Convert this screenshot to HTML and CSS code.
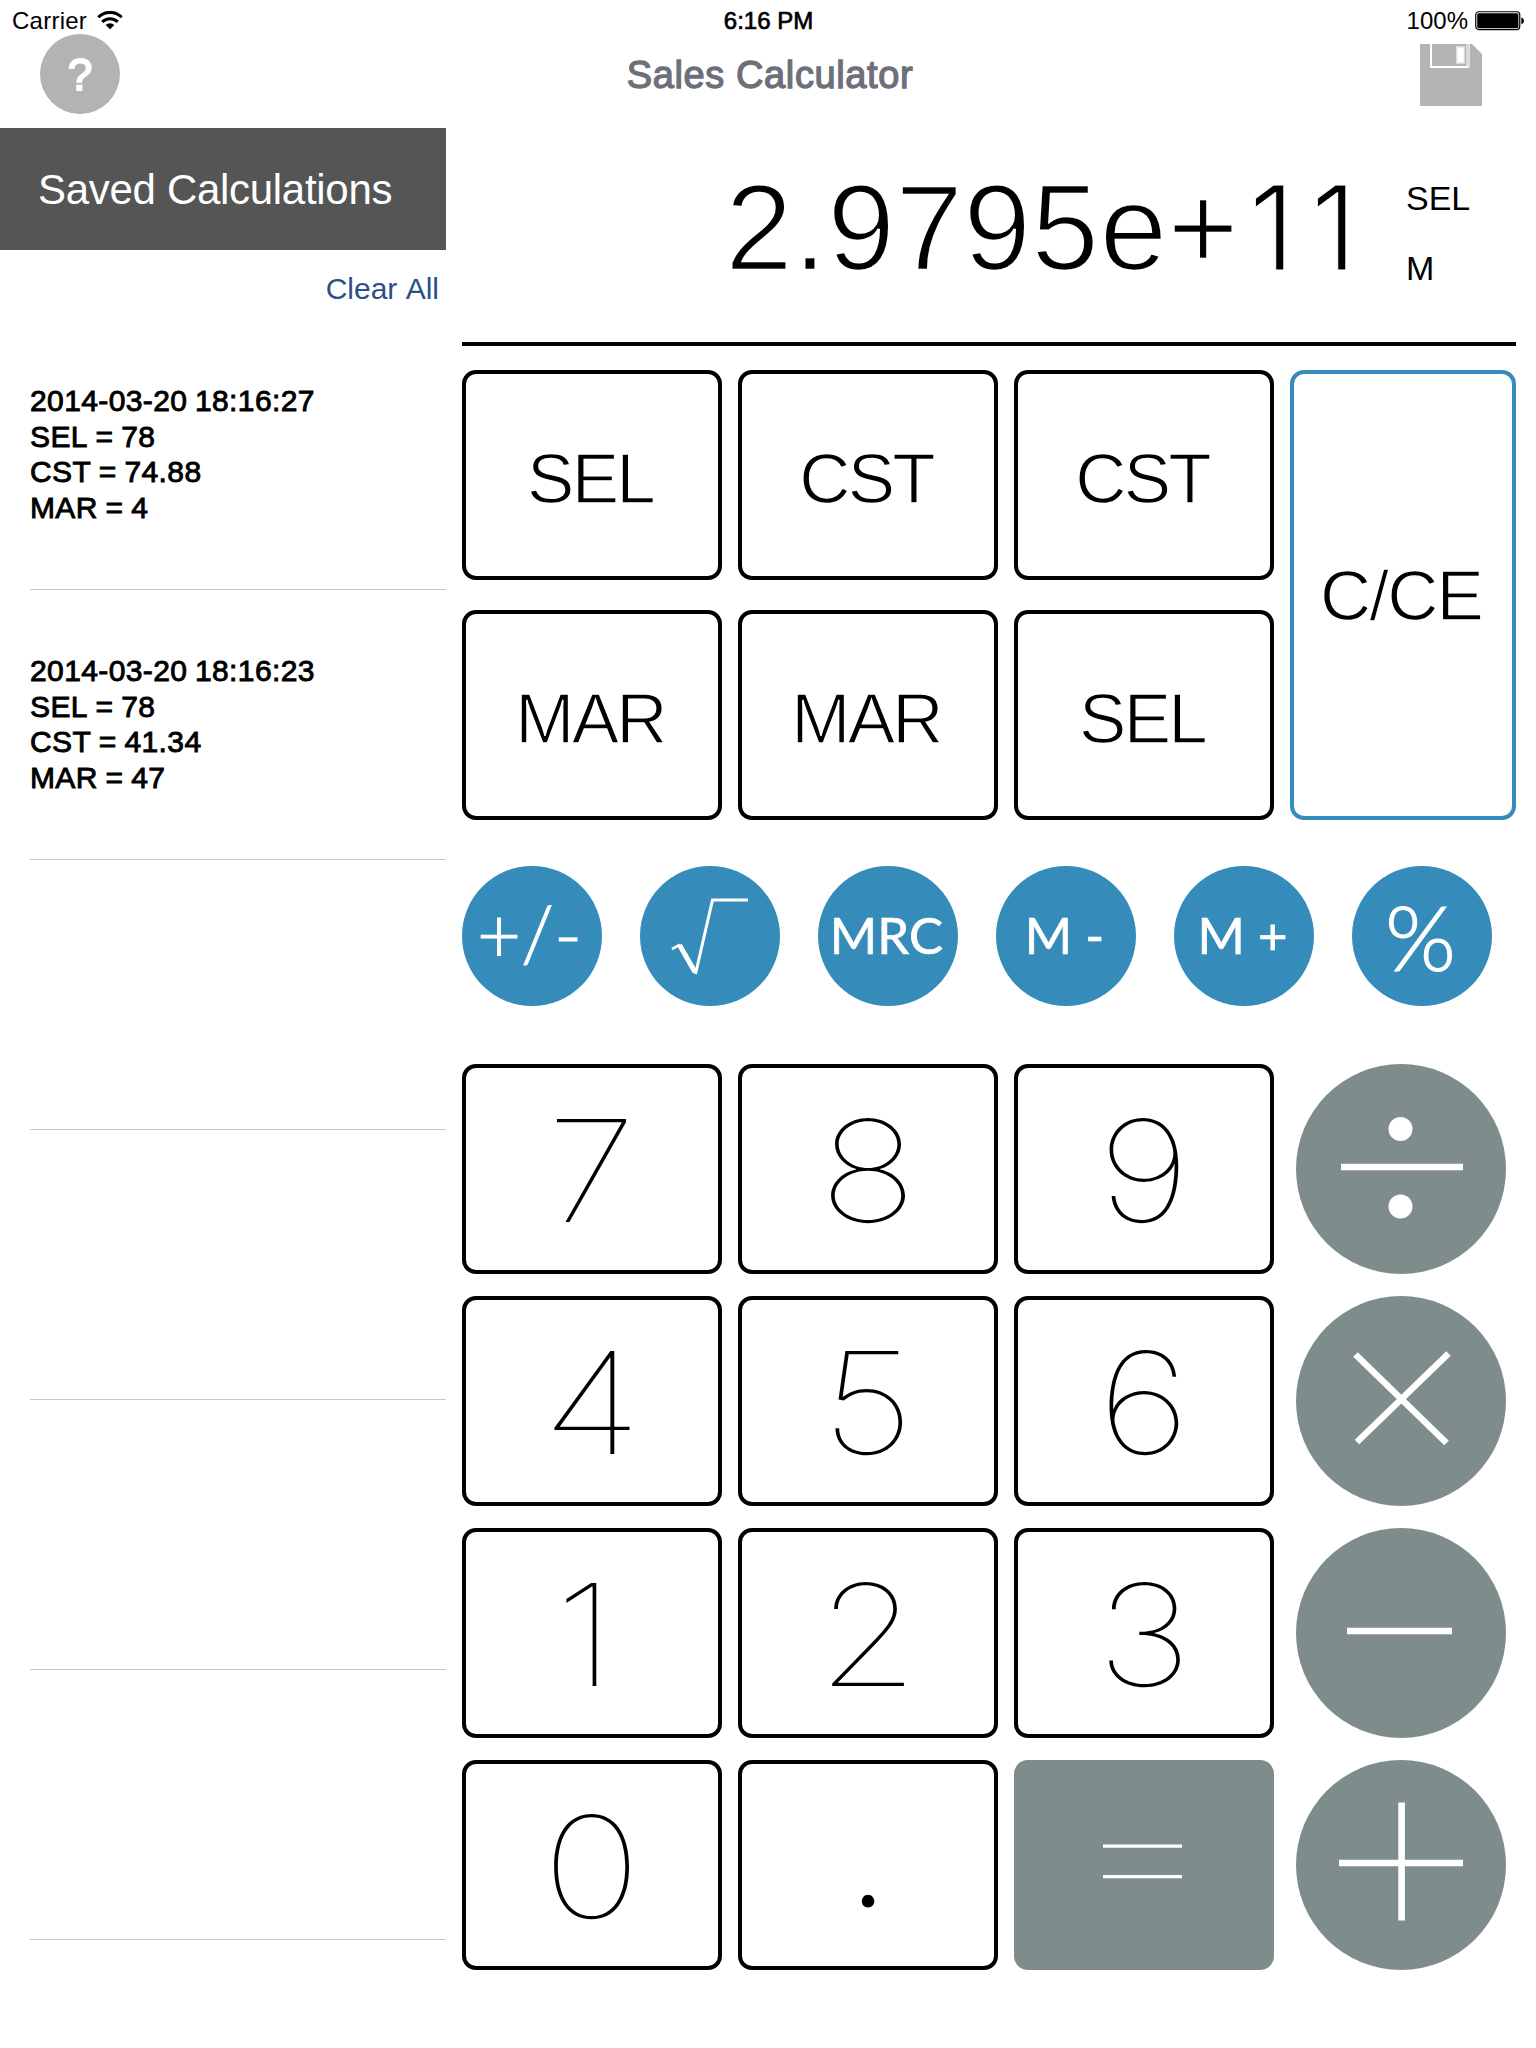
FILE: index.html
```html
<!DOCTYPE html>
<html lang="en">
<head>
<meta charset="utf-8">
<title>Sales Calculator</title>
<link rel="stylesheet" href="styles.css">
</head>
<body>
<header class="status">
  <div class="status-left"><span>Carrier</span>
    <svg class="wifi" width="26" height="19" viewBox="0 0 26 19"><g fill="none" stroke="#000" stroke-width="3"><path d="M1.3 6.2a16.6 16.6 0 0 1 23.4 0"/><path d="M5.2 10.9a11 11 0 0 1 15.6 0"/></g><path d="M13 18.2l-4.3-4.1a6.1 6.1 0 0 1 8.6 0z"/></svg>
  </div>
  <div class="status-time">6:16 PM</div>
  <div class="status-right"><span>100%</span>
    <svg width="50" height="20" viewBox="0 0 50 20"><rect x=".75" y=".75" width="44" height="17.8" rx="3" fill="none" stroke="#000" stroke-width="1.2"/><rect x="2.2" y="2.2" width="41.2" height="15" rx="1.6"/><path d="M46.3 6.2q2.7 1 2.7 3.5t-2.7 3.5z"/></svg>
  </div>
</header>
<nav class="nav">
  <button class="help">?</button>
  <h1 class="title">Sales Calculator</h1>
  <button class="save" aria-label="Save"><svg width="62" height="62" viewBox="0 0 62 62"><path d="M0 0h52l10 10v52H0z" fill="#b3b3b3"/><path d="M46 0h4v24h-4z" fill="#dcdcdc"/><path d="M10 0h2v22h36v2H10z" fill="#fff"/><path d="M36 2h9v18h-9z" fill="#dcdcdc"/><path d="M37.3 3.5h6.4v15h-6.4z" fill="#fff"/></svg></button>
</nav>
<main class="main">
  <aside class="saved">
    <h2 class="saved-title">Saved Calculations</h2>
    <div class="clear"><a>Clear All</a></div>
    <ul class="list">
      <li>2014-03-20 18:16:27<br>SEL = 78<br>CST = 74.88<br>MAR = 4</li>
      <li>2014-03-20 18:16:23<br>SEL = 78<br>CST = 41.34<br>MAR = 47</li>
      <li></li><li></li><li></li><li></li>
    </ul>
  </aside>
  <section class="calc">
    <div class="display">
      <output class="value">2.9795e+<span class="ones">11</span></output>
      <div class="flags"><span>SEL</span><span>M</span></div>
    </div>
    <div class="modes">
      <button class="key word">SEL</button><button class="key word">CST</button><button class="key word">CST</button><button class="key word clear-key">C/CE</button>
      <button class="key word">MAR</button><button class="key word">MAR</button><button class="key word">SEL</button>
    </div>
    <div class="memory">
      <button class="round sign">+/-</button>
      <button class="round" aria-label="Square root"><svg width="140" height="140" viewBox="0 0 140 140" fill="none" stroke="#fff"><path d="M32 83l8-4.300" stroke-width="2.600"/><path d="M39.500 79L55 106" stroke-width="5"/><path d="M55.500 108L72.500 34H108" stroke-width="3"/></svg></button>
      <button class="round mem">MRC</button>
      <button class="round mem">M -</button>
      <button class="round mem">M +</button>
      <button class="round percent">%</button>
    </div>
    <div class="pad">
      <button class="key num"><span>7</span></button><button class="key num"><span>8</span></button><button class="key num"><span>9</span></button>
      <button class="op" aria-label="Divide"><svg width="210" height="210" viewBox="0 0 210 210" fill="#fff"><circle cx="104.500" cy="65" r="12"/><circle cx="104.500" cy="142.500" r="12"/><path d="M45 99.700h122v6.600H45z"/></svg></button>
      <button class="key num wide"><span>4</span></button><button class="key num"><span>5</span></button><button class="key num"><span>6</span></button>
      <button class="op" aria-label="Multiply"><svg width="210" height="210" viewBox="0 0 210 210" stroke="#fff" stroke-width="6.500"><path d="M59.500 58.500L150.500 147M152.500 57.500L61 146"/></svg></button>
      <button class="key num one"><span>1</span></button><button class="key num"><span>2</span></button><button class="key num"><span>3</span></button>
      <button class="op" aria-label="Subtract"><svg width="210" height="210" viewBox="0 0 210 210" fill="#fff"><path d="M51 99.700h105v6.600H51z"/></svg></button>
      <button class="key num wide"><span>0</span></button><button class="key dot">.</button>
      <button class="key equals" aria-label="Equals"><svg width="260" height="210" viewBox="0 0 260 210" fill="#fff"><path d="M89 84.500h79v3.200H89zM89 115h79v3.200H89z"/></svg></button>
      <button class="op" aria-label="Add"><svg width="210" height="210" viewBox="0 0 210 210" fill="#fff"><path d="M43 99.700h124v6.600H43zM102.300 42.500h6.600v118h-6.600z"/></svg></button>
    </div>
  </section>
</main>
</body>
</html>
```

FILE: styles.css
```css
* { box-sizing: border-box; margin: 0; padding: 0; }
body { width: 1536px; height: 2048px; overflow: hidden; background: #fff; color: #000; font-family: "Liberation Sans", Arial, sans-serif; font-kerning: none; }
button { display: flex; align-items: center; justify-content: center; background: none; border: 0; color: inherit; font: inherit; }
svg { display: block; flex: none; }

.status { display: grid; grid-template-columns: 1fr auto 1fr; height: 34px; padding: 7px 11px 0 12px; font-size: 24px; line-height: 28px; }
.status-left { display: flex; gap: 10px; letter-spacing: .25px; }
.status-left svg, .status-right svg { margin-top: 4px; }
.status-time { -webkit-text-stroke: .7px #000; }
.status-right { display: flex; justify-content: flex-end; gap: 7px; }

.nav { display: flex; justify-content: space-between; height: 94px; padding: 0 54px 0 40px; }
.help { width: 80px; height: 80px; padding-top: 2px; border-radius: 50%; background: #b3b3b3; color: #fff; font-size: 44px; -webkit-text-stroke: 1.800px #fff; }
.title { font-size: 38px; font-weight: 400; line-height: 82px; letter-spacing: .6px; color: #6d7079; -webkit-text-stroke: 1.300px #6d7079; }
.save { align-self: flex-start; margin-top: 10px; }

.main { display: grid; grid-template-columns: 446px 1fr; }
.saved-title { height: 122px; padding-left: 38px; background: #555; color: #fff; font-size: 42px; font-weight: 400; line-height: 124px; letter-spacing: -.3px; }
.clear { height: 70px; padding: 22px 7px 0 0; color: #2a5087; font-size: 30px; line-height: 34px; text-align: right; }
.list { padding-left: 30px; list-style: none; }
.list li { display: flow-root; height: 270px; padding-top: 63px; border-bottom: 1px solid #c8c8c8; font-size: 30px; line-height: 35.700px; letter-spacing: .38px; word-spacing: -1px; -webkit-text-stroke: .9px #000; }

.calc { padding: 0 20px 0 16px; }
.display { display: flex; justify-content: flex-end; height: 218px; border-bottom: 4px solid #000; }
.value { padding-top: 31px; margin-right: 33px; font-size: 122px; line-height: 138px; letter-spacing: .2px; -webkit-text-stroke: 2.600px #fff; }
.ones { margin-left: 10px; font-family: Inter, sans-serif; font-size: 117px; font-weight: 300; letter-spacing: 16px; -webkit-text-stroke: .8px #fff; }
.flags { display: flex; flex-direction: column; gap: 30px; width: 110px; padding-top: 50px; font-size: 34px; line-height: 40px; }

.modes { display: grid; grid-template-columns: repeat(3, 260px) 226px; grid-template-rows: 210px 210px; gap: 30px 16px; margin-top: 24px; }
.key { border: 4px solid #000; border-radius: 14px; }
.word { padding: 6px 4px 0 0; font-size: 71px; letter-spacing: -2.800px; -webkit-text-stroke: 1.400px #fff; }
.clear-key { grid-column: 4; grid-row: 1 / 3; border-color: #358cbb; padding-top: 0; letter-spacing: -1.900px; }

.memory { display: flex; gap: 38px; margin-top: 46px; }
.round { width: 140px; height: 140px; border-radius: 50%; background: #358cbb; color: #fff; font-family: Lato, sans-serif; }
.mem { padding: 0 3px 3px 0; font-size: 51px; -webkit-text-stroke: .7px #fff; }
.sign { padding: 0 5px 8px 0; font-size: 76px; font-weight: 300; -webkit-text-stroke: 1px #fff; }
.percent { padding: 0 3px 2px 0; font-size: 91px; font-weight: 300; -webkit-text-stroke: 1.200px #fff; }

.pad { display: grid; grid-template-columns: repeat(3, 260px) 210px; grid-auto-rows: 210px; column-gap: 16px; row-gap: 22px; margin-top: 58px; }
.num { padding-top: 3px; font-family: Inter, sans-serif; font-size: 141px; font-weight: 100; }
.num span { transform: scaleX(1.160); }
.wide span { transform: scaleX(1.190); }
.one { padding-right: 14px; }
.op { margin-left: 6px; width: 210px; border-radius: 50%; background: #7f8c8c; }
.equals { border: 0; background: #7f8c8c; }
.dot { padding-top: 6px; font-family: Lato, sans-serif; font-size: 100px; }
```
